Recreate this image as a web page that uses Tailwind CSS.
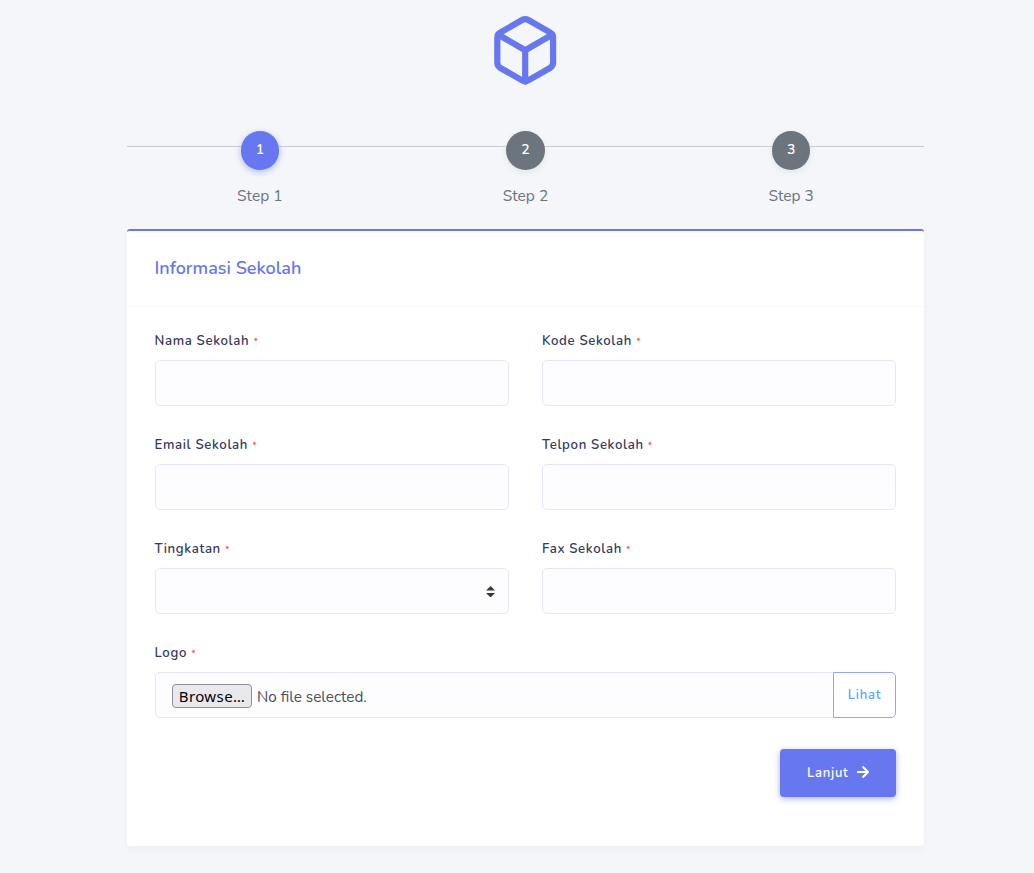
<!DOCTYPE html>
<html lang="id">
<head>
<meta charset="utf-8">
<title>Informasi Sekolah</title>
<script src="https://cdn.jsdelivr.net/npm/@tailwindcss/browser@4"></script>
</head>
<body class="h-[873px] overflow-hidden bg-[#f4f6f9] font-['Nunito','Lato',sans-serif] text-[#6c757d]">
<div class="ml-[127px] w-[797px]">
  <header class="flex h-[131px] justify-center pt-[12.5px]">
    <svg class="h-[74.4px] w-[74.4px]" viewBox="0 0 24 24" fill="none" stroke="#6777ef" stroke-width="2" stroke-linecap="round" stroke-linejoin="round"><path d="M21 16V8a2 2 0 0 0-1-1.73l-7-4a2 2 0 0 0-2 0l-7 4A2 2 0 0 0 3 8v8a2 2 0 0 0 1 1.73l7 4a2 2 0 0 0 2 0l7-4A2 2 0 0 0 21 16z"/><path d="M3.27 6.96 12 12.01l8.73-5.05M12 22.08V12"/></svg>
  </header>
  <nav class="relative grid h-[98px] grid-cols-3 text-center">
    <div class="absolute inset-x-0 top-[15px] h-px bg-[#c9cbd1]"></div>
    <div class="relative flex flex-col items-center"><span class="h-[39px] w-[38px] rounded-full bg-[#6777ef] text-[14px] leading-[37px] font-semibold text-white shadow-[0_2px_6px_#acb5f6]">1</span><span class="mt-[14px] text-[15.5px] leading-6">Step 1</span></div>
    <div class="relative flex flex-col items-center"><span class="h-[39px] w-[39px] rounded-full bg-[#6c757d] text-[14px] leading-[37px] font-semibold text-white shadow-[0_2px_6px_#e1e5e8]">2</span><span class="mt-[14px] text-[15.5px] leading-6">Step 2</span></div>
    <div class="relative flex flex-col items-center"><span class="h-[39px] w-[38px] rounded-full bg-[#6c757d] text-[14px] leading-[37px] font-semibold text-white shadow-[0_2px_6px_#e1e5e8]">3</span><span class="mt-[14px] text-[15.5px] leading-6">Step 3</span></div>
  </nav>
  <main class="h-[617px] rounded-[3px] border-t-2 border-[#6777ef] bg-white shadow-[0_4px_8px_rgba(0,0,0,0.03)]">
    <div class="flex h-[76px] items-center border-b border-[#f9f9f9] px-[27.5px] pb-[2px]"><h1 class="text-[18px] leading-7 font-semibold text-[#6777ef]">Informasi Sekolah</h1></div>
    <form class="px-[28px] pt-[24px]">
      <div class="grid grid-cols-2 gap-x-[33px] text-[13.2px] leading-5 font-semibold tracking-[0.65px] text-[#34395e]">
        <div class="h-[104px]"><div class="-ml-[0.5px]">Nama Sekolah <span class="text-[10px] font-semibold text-[#fc544b]">*</span></div><div class="mt-[8px] h-[46px] rounded-[5px] border border-[#e4e6fc] bg-[#fdfdff]"></div></div>
        <div class="h-[104px]"><div>Kode Sekolah <span class="text-[10px] font-semibold text-[#fc544b]">*</span></div><div class="mt-[8px] h-[46px] rounded-[5px] border border-[#e4e6fc] bg-[#fdfdff]"></div></div>
        <div class="h-[104px]"><div class="-ml-[0.5px]">Email Sekolah <span class="text-[10px] font-semibold text-[#fc544b]">*</span></div><div class="mt-[8px] h-[46px] rounded-[5px] border border-[#e4e6fc] bg-[#fdfdff]"></div></div>
        <div class="h-[104px]"><div>Telpon Sekolah <span class="text-[10px] font-semibold text-[#fc544b]">*</span></div><div class="mt-[8px] h-[46px] rounded-[5px] border border-[#e4e6fc] bg-[#fdfdff]"></div></div>
        <div class="h-[104px]"><div class="-ml-[0.5px]">Tingkatan <span class="text-[10px] font-semibold text-[#fc544b]">*</span></div><div class="mt-[8px] flex h-[46px] items-center justify-end rounded-[5px] border border-[#e4e6fc] bg-[#fdfdff] pt-px pr-[13px]"><svg class="h-[11.5px] w-[9.2px]" viewBox="0 0 4 5"><path fill="#343a40" d="M2 0L0 2h4zm0 5L0 3h4z"/></svg></div></div>
        <div class="h-[104px]"><div>Fax Sekolah <span class="text-[10px] font-semibold text-[#fc544b]">*</span></div><div class="mt-[8px] h-[46px] rounded-[5px] border border-[#e4e6fc] bg-[#fdfdff]"></div></div>
      </div>
      <div class="-ml-[0.5px] text-[13.2px] leading-5 font-semibold tracking-[0.65px] text-[#34395e]">Logo <span class="text-[10px] font-semibold text-[#fc544b]">*</span></div>
      <div class="mt-[8px] flex h-[46px]">
        <div class="flex flex-1 items-center rounded-l-[5px] border border-r-0 border-[#e4e6fc] bg-[#fdfdff] pt-px pl-[16px]">
          <span class="flex h-[24px] w-[80px] items-center justify-center rounded-[4px] border border-[#8f8f9d] bg-[#e9e9ed] pt-px font-['Noto_Sans',sans-serif] text-[15px] tracking-[0.4px] text-black">Browse…</span>
          <span class="ml-[5px] pt-[3px] text-[15.3px] leading-5 text-[#495057]">No file selected.</span>
        </div>
        <div class="w-[63px] rounded-r-[5px] border border-[#98a3f5] text-center text-[13px] leading-[45px] font-semibold tracking-[0.8px] text-[#56a8f9]">Lihat</div>
      </div>
      <div class="mt-[31px] flex justify-end">
        <div class="flex h-[48px] w-[116px] items-center rounded-[4px] bg-[#6777ef] pb-[2px] pl-[27px] text-[13px] leading-5 font-semibold tracking-[0.76px] text-white shadow-[0_2px_6px_#acb5f6]"><span class="w-[50px] pt-px">Lanjut</span><svg class="h-[14px] w-[12.3px]" viewBox="0 0 448 512" fill="white"><path d="M190.5 66.9l22.2-22.2c9.4-9.4 24.6-9.4 33.9 0L441 239c9.4 9.4 9.4 24.6 0 33.9L246.600 467.300c-9.400 9.400-24.600 9.400-33.900 0l-22.200-22.200c-9.500-9.500-9.300-25 .4-34.300L311.400 296H24c-13.300 0-24-10.700-24-24v-32c0-13.300 10.700-24 24-24h287.400L190.900 101.200c-9.800-9.300-10-24.800-.4-34.300z"/></svg></div>
      </div>
    </form>
  </main>
</div>
</body>
</html>
